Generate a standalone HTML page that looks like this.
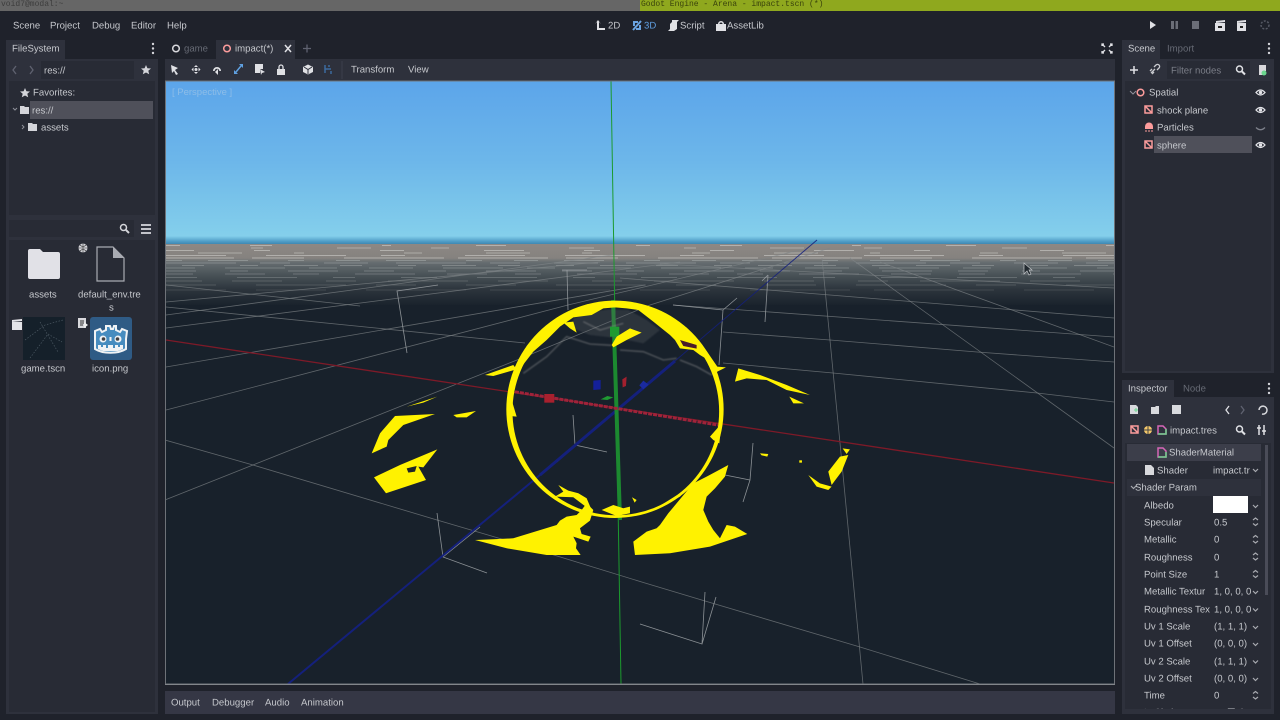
<!DOCTYPE html>
<html><head><meta charset="utf-8"><style>
html,body{margin:0;padding:0;background:#1f222b;width:1280px;height:720px;overflow:hidden}
*{box-sizing:border-box}
.a{position:absolute}
.t{position:absolute;font:9.6px/14px "Liberation Sans",sans-serif;color:#c6c8cd;white-space:nowrap;transform:translateY(-5.7px);text-rendering:geometricPrecision;filter:blur(.2px)}
.d{color:#666a74}
svg{position:absolute;overflow:visible}
</style></head><body>
<div class="a" style="left:0;top:0;width:640px;height:11px;background:#666666"></div>
<div class="a" style="left:640px;top:0;width:640px;height:11px;background:#8fa81e"></div>
<div class="a" style="left:1px;top:0;font:8px/10px 'Liberation Mono',monospace;color:#3d3d3d">void7@modal:~</div>
<div class="a" style="left:641px;top:0;font:8px/10px 'Liberation Mono',monospace;color:#39420c">Godot Engine - Arena - impact.tscn (*)</div>

<!-- panels -->
<div class="a" style="left:6px;top:40px;width:59px;height:19px;background:#2e313c"></div>
<div class="a" style="left:6px;top:59px;width:152px;height:655px;background:#2e313c"></div>
<div class="a" style="left:9px;top:81px;width:146px;height:134px;background:#282b35"></div>
<div class="a" style="left:9px;top:240px;width:146px;height:472px;background:#282b35"></div>
<div class="a" style="left:41px;top:61px;width:93px;height:18px;background:#282b35"></div>
<div class="a" style="left:9px;top:220px;width:125px;height:17px;background:#282b35"></div>
<div class="a" style="left:30px;top:101px;width:123px;height:18px;background:#4f505a"></div>

<div class="a" style="left:216px;top:40px;width:79px;height:19px;background:#2e313c"></div>
<div class="a" style="left:165px;top:59px;width:950px;height:22px;background:#2e313c"></div>
<div class="a" style="left:165px;top:691px;width:950px;height:23px;background:#353745"></div>

<div class="a" style="left:1122px;top:40px;width:38px;height:19px;background:#2e313c"></div>
<div class="a" style="left:1122px;top:59px;width:152px;height:314px;background:#2e313c"></div>
<div class="a" style="left:1125px;top:81px;width:146px;height:290px;background:#282b35"></div>
<div class="a" style="left:1167px;top:61px;width:83px;height:18px;background:#282b35"></div>
<div class="a" style="left:1154px;top:136px;width:98px;height:17px;background:#4f505a"></div>
<div class="a" style="left:1122px;top:380px;width:52px;height:17px;background:#2e313c"></div>
<div class="a" style="left:1122px;top:397px;width:152px;height:317px;background:#2e313c"></div>
<div class="a" style="left:1125px;top:443px;width:146px;height:266px;background:#282b35"></div>
<div class="a" style="left:1127px;top:444px;width:134px;height:17px;background:#3c3e4a"></div>
<div class="a" style="left:1127px;top:479px;width:134px;height:17px;background:#2e313c"></div>
<div class="a" style="left:1213px;top:496px;width:35px;height:17px;background:#fff"></div>
<div class="a" style="left:1265px;top:445px;width:3px;height:150px;background:#4a4c58"></div>

<!-- viewport -->
<svg width="1280" height="720" style="left:0;top:0">
<defs>
<linearGradient id="sky" x1="0" y1="81" x2="0" y2="245" gradientUnits="userSpaceOnUse">
<stop offset="0" stop-color="#5ca5ea"/><stop offset=".5" stop-color="#6db7ea"/><stop offset=".945" stop-color="#84cfeb"/><stop offset=".98" stop-color="#4c9ac4"/><stop offset="1" stop-color="#3a80aa"/></linearGradient>
<linearGradient id="gr" x1="0" y1="244" x2="0" y2="305" gradientUnits="userSpaceOnUse">
<stop offset="0" stop-color="#8d8884"/><stop offset=".23" stop-color="#85827f"/><stop offset=".3" stop-color="#666d70"/><stop offset=".5" stop-color="#4a5358"/><stop offset=".75" stop-color="#2c343c"/><stop offset="1" stop-color="#1a232d"/></linearGradient>
<clipPath id="vp"><rect x="166" y="81" width="948" height="603"/></clipPath>
<filter id="b1"><feGaussianBlur stdDeviation="2"/></filter>
</defs>
<g clip-path="url(#vp)">
<rect x="166" y="81" width="948" height="164" fill="url(#sky)"/>
<rect x="166" y="244" width="948" height="440" fill="#18212b"/>
<rect x="166" y="244" width="948" height="61" fill="url(#gr)"/>
<!-- horizon dashes -->
<g stroke="#dcdcd8" fill="none" stroke-width="1">
<path d="M166 245.500H1114" stroke-dasharray="14 70 22 110 9 85 30 130" stroke-opacity=".5"/>
<path d="M166 248H1114" stroke-dasharray="25 90 12 74 34 60 18 120" stroke-dashoffset="30" stroke-opacity=".45"/>
<path d="M166 250.500H1114" stroke-dasharray="40 60 16 110 24 80" stroke-dashoffset="12" stroke-opacity=".5"/>
<path d="M166 253H1114" stroke-dasharray="18 64 44 52 10 100" stroke-dashoffset="50" stroke-opacity=".45"/>
<path d="M166 255.500H1114" stroke-dasharray="60 40 80 35 24 60" stroke-opacity=".5"/>
<path d="M166 258H1114" stroke-dasharray="90 18 52 40 100 14" stroke-dashoffset="22" stroke-opacity=".5"/>
<g stroke="#a8adae">
<path d="M166 260.500H1114" stroke-dasharray="24 26 40 40 16 32" stroke-dashoffset="8" stroke-opacity=".5"/>
<path d="M166 263H1114" stroke-dasharray="70 24 30 34 44 28" stroke-opacity=".45"/>
<path d="M166 265.500H1114" stroke-dasharray="34 22 22 36 18 26" stroke-dashoffset="40" stroke-opacity=".45"/>
<path d="M166 268H1114" stroke-dasharray="44 30 60 24 28 32" stroke-dashoffset="15" stroke-opacity=".42"/>
<path d="M166 271H1114" stroke-dasharray="30 34 18 40 50 26" stroke-opacity=".4"/>
<path d="M166 274H1114" stroke-dasharray="60 32 40 28 26 36" stroke-dashoffset="33" stroke-opacity=".36"/>
<path d="M166 277.500H1114" stroke-dasharray="36 40 60 36 22 46" stroke-dashoffset="5" stroke-opacity=".32"/>
<path d="M166 281H1114" stroke-dasharray="80 30 50 44 30 32" stroke-dashoffset="44" stroke-opacity=".28"/>
<path d="M166 285H1114" stroke-dasharray="50 40 90 30 40 50" stroke-opacity=".24"/>
<path d="M166 290H1114" stroke-dasharray="120 30 70 40 100 24" stroke-dashoffset="60" stroke-opacity=".18"/>
</g>
</g>
<!-- grid -->
<g stroke="#7f8488" stroke-width=".8" fill="none" stroke-opacity=".7">
<path d="M166 302L600 262M166 315L620 254M166 328L680 262"/>
<path d="M166 367L645 285M166 410L568 305L800 250M165 500L517 360L650 305L830 248"/>
<path d="M165 440L253 465L437 520L505 540L645 583L705 601L860 647L980 684"/>
<path d="M166 307L525 343M166 285L360 306"/>
<path d="M620 278L1114 318M660 264L1114 288"/>
<path d="M673 305L1114 337M723 332L830 340L977 352L1114 362M723 363L833 373L1037 393L1114 402"/>
<path d="M822 258L840 443L863 684M850 258L1114 448M880 262L1114 347"/>
</g>
<!-- wire boxes -->
<g stroke="#a0a4a8" stroke-width=".8" fill="none" stroke-opacity=".85">
<path d="M438 285L397 291L407 353M562 270H587M567 270L568 310"/>
<path d="M673 305L723 310L737 298M723 310L719 365M768 275L765 322M768 275L762 281"/>
<path d="M573 415L575 445L607 452M575 445L557 462"/>
<path d="M753 443L750 480L725 475M750 480L743 502"/>
<path d="M437 513L443 557L487 573M443 557L480 527"/>
<path d="M705 592L702 644L640 624M702 644L716 597"/>
</g>
<!-- axes -->
<path d="M166 340L1114 483" stroke="#7d1a28" stroke-width="1.3"/>
<path d="M817 240L675 361" stroke="#14207c" stroke-width="1" stroke-opacity=".85"/>
<path d="M675 361L540 475" stroke="#14207c" stroke-width="3"/>
<path d="M540 475L288 684" stroke="#14207c" stroke-width="2"/>
<path d="M611 81L621 684" stroke="#1c9a2e" stroke-width="1"/>
<path d="M613 300L620 520" stroke="#1c8a30" stroke-width="4"/>
<path d="M510 391L718 425" stroke="#a0233a" stroke-width="3" stroke-dasharray="4 1"/>
<g transform="translate(360 280) scale(.3333)">
<path d="M640 115L700 95L745 88L805 90L860 120L900 150L850 190L780 175L690 165L640 145Z" fill="#5a5f64" fill-opacity=".3" filter="url(#b1)"/>
<path d="M490 280L560 230L620 170L690 192L755 196M780 210L850 215L910 240L950 235M960 240L1010 260L1055 285M670 125L720 150L790 130" fill="none" stroke="#9a9a9a" stroke-opacity=".45" stroke-width="4" filter="url(#b1)"/>
<!-- gizmo -->
<path d="M700 302L722 300L722 328L700 330Z" fill="#14209a"/>
<path d="M787 298L800 290L798 318L788 322Z" fill="#a3202e"/>
<path d="M722 358L742 348L760 352L742 360Z" fill="#1f9a32"/>
<rect x="750" y="140" width="28" height="30" fill="#1f9a32"/>
<path d="M850 302L866 314L850 328L838 316Z" fill="#1a2aa0"/>
<rect x="553" y="342" width="30" height="26" fill="#a8202e"/>
<!-- yellow -->
<g fill="#fff200">
<path fill-rule="evenodd" d="M439 388A326 326 0 1 1 1091 388A326 326 0 1 1 439 388ZM457.500 394A310 312 0 1 0 1077.500 394A310 312 0 1 0 457.500 394Z"/>
<path d="M765 64L840 76L905 94L980 143L1040 213L1072 260L1098 262L1072 275L1065 292L1045 240L1020 225L1000 210L960 205L945 180L930 165L880 125L835 90L800 85L765 82L730 85L695 105L640 112L600 140L560 180L520 215L485 260L462 295L465 300L500 198L590 113L680 73Z"/>
<path d="M610 128L640 125L650 158L630 145Z"/>
<path d="M755 195L770 170L810 145L845 158L800 180L760 202Z"/>
<path d="M375 285L460 255L470 268L400 288Z"/>
<path d="M455 360L470 410L450 408Z"/>
<path d="M1050 470L1085 430L1078 490L1060 480Z"/>
<!-- bottom cluster -->
<path d="M595 615L625 632L655 640L680 655L697 695L640 652L585 650L610 635Z"/>
<path d="M345 780L400 778L460 775L525 755L590 735L600 722L620 710L650 705L665 690L680 670L700 690L690 722L660 745L665 762L692 770L685 785L655 775L640 770L650 790L648 805L662 825L560 825L500 815L440 805Z"/>
<path d="M725 690L760 675L790 685L810 680L810 700L770 708Z"/>
<path d="M816 652L830 660L824 668Z"/>
<path d="M820 785L860 755L890 745L900 735L925 700L950 670L975 640L1000 610L1040 590L1105 555L1095 590L1065 625L1040 650L1030 690L1045 725L1060 750L1080 775L1100 735L1125 740L1162 762L1050 800L930 820L825 825Z"/>
<path d="M880 690L960 640L1000 605L960 650L900 680Z"/>
<!-- left pieces -->
<path d="M42 592L120 555L232 508L190 562L175 560L198 600L78 640Z"/>
<path d="M35 520L60 460L105 408L225 402L130 435L85 480L80 500Z"/>
<path d="M140 380L232 350L190 368Z"/>
<path d="M280 405L348 393L320 412L290 412Z"/>
<!-- right pieces -->
<path d="M1125 305L1135 265L1200 285L1280 315L1350 345L1280 330L1220 300L1160 295Z"/>
<path d="M1288 350L1332 370L1300 370Z"/>
<path d="M1200 520L1225 522L1222 530L1205 526Z"/>
<path d="M1345 585L1380 610L1415 620L1405 630L1370 620Z"/>
<path d="M1405 575L1440 530L1465 525L1445 575L1415 615Z"/>
<path d="M1448 505L1470 508L1460 522Z"/>
<rect x="1318" y="541" width="8" height="7"/>
</g>
<path d="M960 180L1010 195L1010 206L970 198Z" fill="#4a1c2a"/>
<path d="M140 565L170 558L165 575L145 578Z" fill="#1e2428"/>
</g>
<!-- cursor -->
<path d="M1024 263V274L1027 271L1029 275L1031 274L1029 270L1032 270Z" fill="#222a30" stroke="#c0c3c6" stroke-width=".7"/>
</g>
<rect x="165.500" y="81" width="949" height="603" fill="none" stroke="#6e7278"/>
<path d="M165 684.500H1115" stroke="#82868b"/>
<text x="172" y="95" font-family="Liberation Sans,sans-serif" font-size="9.500" fill="#8dbde8">[ Perspective ]</text>

<!-- top bar icons -->
<g fill="#e0e1e5">
<path d="M597 22V30H605V28H599V22L601 24L598 20L595 24Z"/>
<path d="M633 21h5v2h-3v3h-2zM641 30h-5v-2h3v-3h2z" fill="#6aa3e0"/><path d="M633 30L641 21" stroke="#6aa3e0" stroke-width="2"/>
<path d="M672 20H679L677 22V29L674 31H668L670 29V24L672 22Z"/>
<path d="M716 24H726V31H716ZM718 24A3 3 0 0 1 724 24H722.500A1.500 1.500 0 0 0 719.500 24Z"/>
<!-- play cluster -->
<path d="M1150 21L1156 25L1150 29Z"/>
<path d="M1171 21H1174V29H1171ZM1175.500 21H1178V29H1175.500Z" fill="#6b6e78"/>
<rect x="1192" y="21" width="7" height="8" fill="#6b6e78"/>
<path d="M1215 23H1225V31H1215Z"/><path d="M1237 23H1246V31H1237Z"/>
<path d="M1216 21L1225 20V22L1216 23ZM1237 21L1246 20V22L1237 23Z"/>
</g>
<circle cx="1265" cy="25" r="4" fill="none" stroke="#565964" stroke-width="1.500" stroke-dasharray="2 1.500"/>
<path d="M1218 27H1222M1240 27H1243" stroke="#222" stroke-width="2"/>
<!-- left dock icons -->
<g fill="#d4d5da">
<circle cx="153" cy="44" r="1.200"/><circle cx="153" cy="48.500" r="1.200"/><circle cx="153" cy="53" r="1.200"/>
<circle cx="1269" cy="44" r="1.200"/><circle cx="1269" cy="48.500" r="1.200"/><circle cx="1269" cy="53" r="1.200"/>
<circle cx="1269" cy="384" r="1.200"/><circle cx="1269" cy="388.500" r="1.200"/><circle cx="1269" cy="393" r="1.200"/>
<path id="s" d="M146 65L147.400 68.200L151 68.500L148.300 70.800L149.200 74.300L146 72.500L142.800 74.300L143.700 70.800L141 68.500L144.600 68.200Z"/>
<path d="M25 88L26.400 91.200L30 91.500L27.300 93.800L28.200 97.300L25 95.500L21.800 97.300L22.700 93.800L20 91.500L23.600 91.200Z"/>
<path d="M20 106H24L25 107H29V114H20Z"/>
<path d="M28 123H32L33 124H37V131H28Z"/>
<path d="M141 224h10v2h-10zM141 228h10v2h-10zM141 232h10v2h-10z" opacity=".9"/>
<path d="M30 249H40L43 252H58Q60 252 60 254V277Q60 279 58 279H30Q28 279 28 277V251Q28 249 30 249Z" fill="#e1e1e7"/>
</g>
<path d="M15 66L12 70L15 74M29 66L32 70L29 74" fill="none" stroke="#5f6270" stroke-width="1.300" transform="translate(1 0)"/>
<path d="M13 108L15 110L17 108M22 125L24 127L22 129" fill="none" stroke="#8f919a" stroke-width="1"/>
<circle cx="123.500" cy="227.500" r="3" fill="none" stroke="#d4d5da" stroke-width="1.500"/><path d="M126 230L129 233" stroke="#d4d5da" stroke-width="2"/>
<circle cx="83" cy="248" r="4.500" fill="#d4d5da"/><path d="M83 243.500V252.500M78.500 248H87.500M80 245C82 247 84 247 86 245M80 251C82 249 84 249 86 251" stroke="#333" stroke-width=".6" fill="none"/>
<path d="M97 247H113L124 258V281H97Z" fill="#282b35" stroke="#a9abb2" stroke-width="1.200"/><path d="M113 247L124 258H113Z" fill="#a9abb2"/>
<rect x="23" y="317" width="42" height="43" fill="#15202a"/>
<path d="M25 340L45 325L63 320M30 358L48 334L62 342M40 322L58 352" stroke="#53606a" stroke-width=".6" stroke-dasharray="1.500 1.500" fill="none"/>
<path d="M12 322H22V330H12Z" fill="#e3e3e8"/><path d="M12 320L22 319V321L12 322Z" fill="#e3e3e8"/>
<path d="M78 318H86V328H78Z" fill="#d8d8dc"/><path d="M80 321H84M80 323H84M80 325H83" stroke="#333"/><path d="M84 322L88 325L84 328Z" fill="#eee"/>
<rect x="90" y="317" width="42" height="43" rx="3" fill="#2f5b85"/>
<path d="M95 339L95 331L100 329L102 332L106 330V326H110L111 329H113L114 326H116V330L120 332L122 329L127 331L126 339V349C118 354 103 354 95 349Z" fill="#478cbf" stroke="#f1f3f5" stroke-width="2"/>
<path d="M98 345V349L103 351H118L123 349V345" fill="#f1f3f5"/>
<path d="M102 345V347M107 345V348M114 345V348M119 345V347" stroke="#478cbf" stroke-width="2"/>
<circle cx="103" cy="339" r="3.500" fill="#f1f3f5"/><circle cx="118" cy="339" r="3.500" fill="#f1f3f5"/>
<circle cx="103.500" cy="339" r="1.800" fill="#414042"/><circle cx="117.500" cy="339" r="1.800" fill="#414042"/>
<rect x="109.500" y="337" width="2" height="4" fill="#f1f3f5"/>
<!-- tabs icons -->
<circle cx="176" cy="48.500" r="3.300" fill="none" stroke="#d8d8dc" stroke-width="1.500"/>
<circle cx="227" cy="48.500" r="3.300" fill="none" stroke="#fc9c9c" stroke-width="1.500"/>
<path d="M285 45L291 52M291 45L285 52" stroke="#e0e1e5" stroke-width="1.500"/>
<path d="M303 48.500H311M307 44.500V52.500" stroke="#5f6270" stroke-width="1.300"/>
<path d="M1102 46V44H1104M1110 44H1112V46M1112 51V53H1110M1104 53H1102V51M1102 44L1105 47M1112 44L1109 47M1112 53L1109 50M1102 53L1105 50" stroke="#e0e1e5" stroke-width="1.300" fill="none"/>
<!-- toolbar icons -->
<g fill="#dfe0e4">
<path d="M171 65L178 68L175 70L178 74L176 75L174 71L172 73Z"/>
<path d="M196 65L198 67H194ZM196 74L198 72H194ZM191.500 69.500L193.500 67.500V71.500ZM200.500 69.500L198.500 67.500V71.500Z"/><circle cx="196" cy="69.500" r="1.500"/>
<path d="M213 71A4 4 0 1 1 221 71H219.300A2.300 2.300 0 1 0 214.700 71Z"/><path d="M215 72L218 69V75Z"/>
<path d="M234 70V74H238ZM243 68V64H239Z" fill="#5fa0e0"/><path d="M236 72L241 66" stroke="#5fa0e0" stroke-width="1.500"/>
<path d="M255 64H263V69H260V73H255Z"/><path d="M260 69L265 72L262 73L261 75Z"/>
<path d="M277 69H285V75H277Z"/><path d="M279 69V67A2 2 0 0 1 283 67V69" fill="none" stroke="#dfe0e4" stroke-width="1.300"/>
<path d="M308 64.500L313 67V72L308 74.500L303 72V67Z"/>
</g>
<path d="M304 67L308 69.500L312 67M308 69.500V74" stroke="#2e313c" fill="none"/>
<path d="M325 65V73M325 69H331M329 65V67M331 71V74" stroke="#3c6b9f" stroke-width="1.500" fill="none"/>
<path d="M342 61V79" stroke="#3c3f4c"/>
<!-- scene icons -->
<path d="M1130 70H1138M1134 66V74" stroke="#e0e1e5" stroke-width="1.500"/>
<path d="M1151 73L1155 69M1154 67L1156 65A2 2 0 0 1 1159 68L1157 70M1150 71L1152 69M1152 74L1154 72" stroke="#c8c9ce" stroke-width="1.300" fill="none"/>
<circle cx="1239.500" cy="69" r="3" fill="none" stroke="#e0e1e5" stroke-width="1.500"/><path d="M1242 71.500L1245 74.500" stroke="#e0e1e5" stroke-width="2"/>
<path d="M1259 65H1266V71H1263V75H1259Z" fill="#d8d8dc"/><circle cx="1264" cy="73" r="2.500" fill="#6bd68e"/>
<path d="M1130 91L1133 94L1136 91" stroke="#8f919a" fill="none"/>
<circle cx="1140.500" cy="92.500" r="3.300" fill="none" stroke="#fc9c9c" stroke-width="1.500"/>
<g fill="none" stroke="#fc9c9c" stroke-width="1.500"><rect x="1145" y="106" width="7" height="7"/><path d="M1145 106L1152 113"/><rect x="1145" y="141" width="7" height="7"/><path d="M1145 141L1152 148"/></g>
<path d="M1145 127C1145 121 1153 121 1153 127V129H1145Z" fill="#fc9c9c"/><path d="M1146 130V132M1149 130V132M1152 130V132" stroke="#fc9c9c"/>
<g id="eyes" fill="none" stroke="#e4e5e9" stroke-width="1.300"><path d="M1256 92.500Q1260.500 87.500 1265 92.500Q1260.500 97.500 1256 92.500Z"/><path d="M1256 110Q1260.500 105 1265 110Q1260.500 115 1256 110Z"/><path d="M1256 145Q1260.500 140 1265 145Q1260.500 150 1256 145Z"/></g>
<g fill="#e4e5e9"><circle cx="1260.500" cy="92.500" r="1.700"/><circle cx="1260.500" cy="110" r="1.700"/><circle cx="1260.500" cy="145" r="1.700"/></g>
<path d="M1256 127.500Q1260.500 132 1265 127.500" fill="none" stroke="#7d808a" stroke-width="1.300"/>
<!-- inspector icons -->
<g fill="#d8d9dd">
<path d="M1130 405H1136L1138 407V414H1130Z"/><path d="M1151 407H1155L1156 406H1159V414H1151Z"/><path d="M1172 405H1181V414H1172Z"/>
<path d="M1145 465H1151L1154 468V475H1145Z"/>
</g>
<path d="M1134 410H1138M1136 408V412" stroke="#6bd68e"/>
<path d="M1259 410A4 4 0 1 1 1262 414" stroke="#d8d9dd" stroke-width="1.500" fill="none"/>
<path d="M1229 406L1226 410L1229 414" stroke="#e0e1e5" stroke-width="1.300" fill="none"/>
<path d="M1241 406L1244 410L1241 414" stroke="#5f6270" stroke-width="1.300" fill="none"/>
<rect x="1131" y="426" width="7" height="7" fill="none" stroke="#fc9c9c" stroke-width="1.500"/><path d="M1131 426L1138 433" stroke="#fc9c9c" stroke-width="1.500"/>
<circle cx="1148" cy="430" r="4" fill="#f5c86a"/><path d="M1148 426V434M1144 430H1152" stroke="#444"/>
<path d="M1158 426H1163L1166 429V434H1158Z" fill="#2e313c" stroke="#d667b8" stroke-width="1.500"/>
<path d="M1158 434H1166V429" stroke="#6fd08b" stroke-width="1.500" fill="none"/>
<path d="M1158 448H1163L1166 451V457H1158Z" fill="#3c3e4a" stroke="#d667b8" stroke-width="1.500"/>
<path d="M1158 457H1166V452" stroke="#6fd08b" stroke-width="1.500" fill="none"/>
<circle cx="1239.500" cy="429" r="3" fill="none" stroke="#e0e1e5" stroke-width="1.500"/><path d="M1242 431.500L1245 434.500" stroke="#e0e1e5" stroke-width="2"/>
<path d="M1259 425V435M1264 425V435M1257 428H1261M1262 431H1266" stroke="#e0e1e5" stroke-width="1.500"/>
<g stroke="#a8aab0" stroke-width="1.200" fill="none">
<path d="M1253 469L1255.500 471.500L1258 469M1253 505L1255.500 507.500L1258 505M1253 591L1255.500 593.500L1258 591M1253 608.500L1255.500 611L1258 608.500M1253 626L1255.500 628.500L1258 626M1253 643L1255.500 645.500L1258 643M1253 660.500L1255.500 663L1258 660.500M1253 678L1255.500 680.500L1258 678M1131 486L1133.500 488.500L1136 486"/>
<path d="M1253 520L1255.500 518L1258 520M1253 523.500L1255.500 525.500L1258 523.500M1253 537.500L1255.500 535.500L1258 537.500M1253 541L1255.500 543L1258 541M1253 555L1255.500 553L1258 555M1253 558L1255.500 560L1258 558M1253 572.500L1255.500 570.500L1258 572.500M1253 575.500L1255.500 577.500L1258 575.500M1253 693.500L1255.500 691.500L1258 693.500M1253 697L1255.500 699L1258 697"/>
</g>
</svg>

<!-- text -->
<span class="t" style="left:13px;top:25px">Scene</span>
<span class="t" style="left:50px;top:25px">Project</span>
<span class="t" style="left:92px;top:25px">Debug</span>
<span class="t" style="left:131px;top:25px">Editor</span>
<span class="t" style="left:167px;top:25px">Help</span>
<span class="t" style="left:608px;top:25px">2D</span>
<span class="t" style="left:644px;top:25px;color:#5f9ee0">3D</span>
<span class="t" style="left:680px;top:25px">Script</span>
<span class="t" style="left:727px;top:25px">AssetLib</span>
<span class="t" style="left:12px;top:48px">FileSystem</span>
<span class="t d" style="left:184px;top:48px">game</span>
<span class="t" style="left:235px;top:48px">impact(*)</span>
<span class="t" style="left:44px;top:70px">res://</span>
<span class="t" style="left:33px;top:92px">Favorites:</span>
<span class="t" style="left:32px;top:110px">res://</span>
<span class="t" style="left:41px;top:127px">assets</span>
<span class="t" style="left:29px;top:294px">assets</span>
<span class="t" style="left:78px;top:294px">default_env.tre</span>
<span class="t" style="left:109px;top:307px">s</span>
<span class="t" style="left:21px;top:368px">game.tscn</span>
<span class="t" style="left:92px;top:368px">icon.png</span>
<span class="t" style="left:351px;top:69px">Transform</span>
<span class="t" style="left:408px;top:69px">View</span>
<span class="t" style="left:171px;top:702px">Output</span>
<span class="t" style="left:212px;top:702px">Debugger</span>
<span class="t" style="left:265px;top:702px">Audio</span>
<span class="t" style="left:301px;top:702px">Animation</span>
<span class="t" style="left:1128px;top:48px">Scene</span>
<span class="t d" style="left:1167px;top:48px">Import</span>
<span class="t d" style="left:1171px;top:70px;color:#7b7e88">Filter nodes</span>
<span class="t" style="left:1149px;top:92px">Spatial</span>
<span class="t" style="left:1157px;top:110px">shock plane</span>
<span class="t" style="left:1157px;top:127px">Particles</span>
<span class="t" style="left:1157px;top:145px">sphere</span>
<span class="t" style="left:1128px;top:388px">Inspector</span>
<span class="t d" style="left:1183px;top:388px">Node</span>
<span class="t" style="left:1170px;top:430px">impact.tres</span>
<span class="t" style="left:1169px;top:452px">ShaderMaterial</span>
<span class="t" style="left:1157px;top:470px">Shader</span>
<span class="t" style="left:1213px;top:470px">impact.tr</span>
<span class="t" style="left:1135px;top:487px">Shader Param</span>
<span class="t" style="left:1144px;top:505px">Albedo</span>
<span class="t" style="left:1144px;top:522px">Specular</span><span class="t" style="left:1214px;top:522px">0.5</span>
<span class="t" style="left:1144px;top:539px">Metallic</span><span class="t" style="left:1214px;top:539px">0</span>
<span class="t" style="left:1144px;top:557px">Roughness</span><span class="t" style="left:1214px;top:557px">0</span>
<span class="t" style="left:1144px;top:574px">Point Size</span><span class="t" style="left:1214px;top:574px">1</span>
<span class="t" style="left:1144px;top:591px">Metallic Textur</span><span class="t" style="left:1214px;top:591px">1, 0, 0, 0</span>
<span class="t" style="left:1144px;top:609px">Roughness Tex</span><span class="t" style="left:1214px;top:609px">1, 0, 0, 0</span>
<span class="t" style="left:1144px;top:626px">Uv 1 Scale</span><span class="t" style="left:1214px;top:626px">(1, 1, 1)</span>
<span class="t" style="left:1144px;top:643px">Uv 1 Offset</span><span class="t" style="left:1214px;top:643px">(0, 0, 0)</span>
<span class="t" style="left:1144px;top:661px">Uv 2 Scale</span><span class="t" style="left:1214px;top:661px">(1, 1, 1)</span>
<span class="t" style="left:1144px;top:678px">Uv 2 Offset</span><span class="t" style="left:1214px;top:678px">(0, 0, 0)</span>
<span class="t" style="left:1144px;top:695px">Time</span><span class="t" style="left:1214px;top:695px">0</span>
<div class="a" style="left:1125px;top:704px;width:146px;height:5px;overflow:hidden">
<span class="t" style="left:19px;top:8px">Is Circle</span><span class="t" style="left:102px;top:8px">&#9744; On</span></div>
</body></html>
